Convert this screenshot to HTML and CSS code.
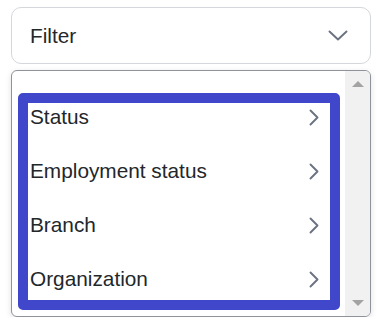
FILE: index.html
```html
<!DOCTYPE html>
<html>
<head>
  <title>Filter</title>
  <link rel="stylesheet" href="styles.css">
</head>
<body>
  <div class="filter">
    <button class="filter-toggle" type="button">
      <span>Filter</span>
      <svg class="chevron-down" width="20" height="11" viewBox="0 0 20 11">
        <polyline points="1.5,1.5 10,9.5 18.5,1.5" />
      </svg>
    </button>

    <div class="menu">
      <div class="menu-body">
        <div class="menu-focus">
          <ul class="menu-list">
            <li class="menu-item">Status<svg class="chevron-right" width="10" height="17" viewBox="0 0 10 17"><polyline points="1.5,1.5 8.5,8.5 1.5,15.5" /></svg></li>
            <li class="menu-item">Employment status<svg class="chevron-right" width="10" height="17" viewBox="0 0 10 17"><polyline points="1.5,1.5 8.5,8.5 1.5,15.5" /></svg></li>
            <li class="menu-item">Branch<svg class="chevron-right" width="10" height="17" viewBox="0 0 10 17"><polyline points="1.5,1.5 8.5,8.5 1.5,15.5" /></svg></li>
            <li class="menu-item">Organization<svg class="chevron-right" width="10" height="17" viewBox="0 0 10 17"><polyline points="1.5,1.5 8.5,8.5 1.5,15.5" /></svg></li>
          </ul>
        </div>
      </div>
      <div class="scrollbar">
        <span class="arrow-up"></span>
        <span class="arrow-down"></span>
      </div>
    </div>
  </div>
</body>
</html>
```

FILE: styles.css
```css
:root {
  --text: #23272b;
  --muted: #6b7280;
  --border: #d4d7dc;
  --focus: #4047cb;
  --font: "Liberation Sans", Arial, sans-serif;
}
body {
  margin: 0;
  background: #fff;
  font-family: var(--font);
  color: var(--text);
}
.filter {
  width: 360px;
  padding: 7px 0 0 11px;
}
.filter-toggle {
  display: flex;
  align-items: center;
  justify-content: space-between;
  width: 100%;
  height: 57px;
  padding: 0 22px 0 18px;
  background: #fff;
  border: 1px solid var(--border);
  border-radius: 10px;
  font-family: var(--font);
  font-size: 20.8px;
  color: var(--text);
}
.chevron-down polyline,
.chevron-right polyline {
  fill: none;
  stroke: var(--muted);
  stroke-width: 1.9;
  stroke-linecap: round;
  stroke-linejoin: round;
}
.menu {
  display: flex;
  margin-top: 6px;
  height: 247px;
  box-sizing: border-box;
  border: 1px solid #8e939b;
  border-radius: 6px;
  background: #fff;
  box-shadow: 0 2px 6px rgba(0, 0, 0, 0.12);
  overflow: hidden;
}
.menu-body {
  flex: 1;
  padding: 22px 5px 6px 6px;
}
.menu-focus {
  height: 100%;
  box-sizing: border-box;
  border: 10px solid var(--focus);
  border-radius: 5px;
  overflow: hidden;
}
.menu-list {
  list-style: none;
  margin: -13px 0 0;
  padding: 0;
}
.menu-item {
  display: flex;
  align-items: center;
  justify-content: space-between;
  height: 54px;
  padding: 0 11px 0 2px;
  font-size: 20.8px;
  line-height: 24px;
}
.scrollbar {
  width: 25px;
  background: #f1f1f1;
  display: flex;
  flex-direction: column;
  align-items: center;
  justify-content: space-between;
  padding: 10px 0 10px;
}
.arrow-up {
  border-left: 6px solid transparent;
  border-right: 6px solid transparent;
  border-bottom: 6px solid #a3a3a3;
}
.arrow-down {
  border-left: 6px solid transparent;
  border-right: 6px solid transparent;
  border-top: 6px solid #a3a3a3;
}
```
